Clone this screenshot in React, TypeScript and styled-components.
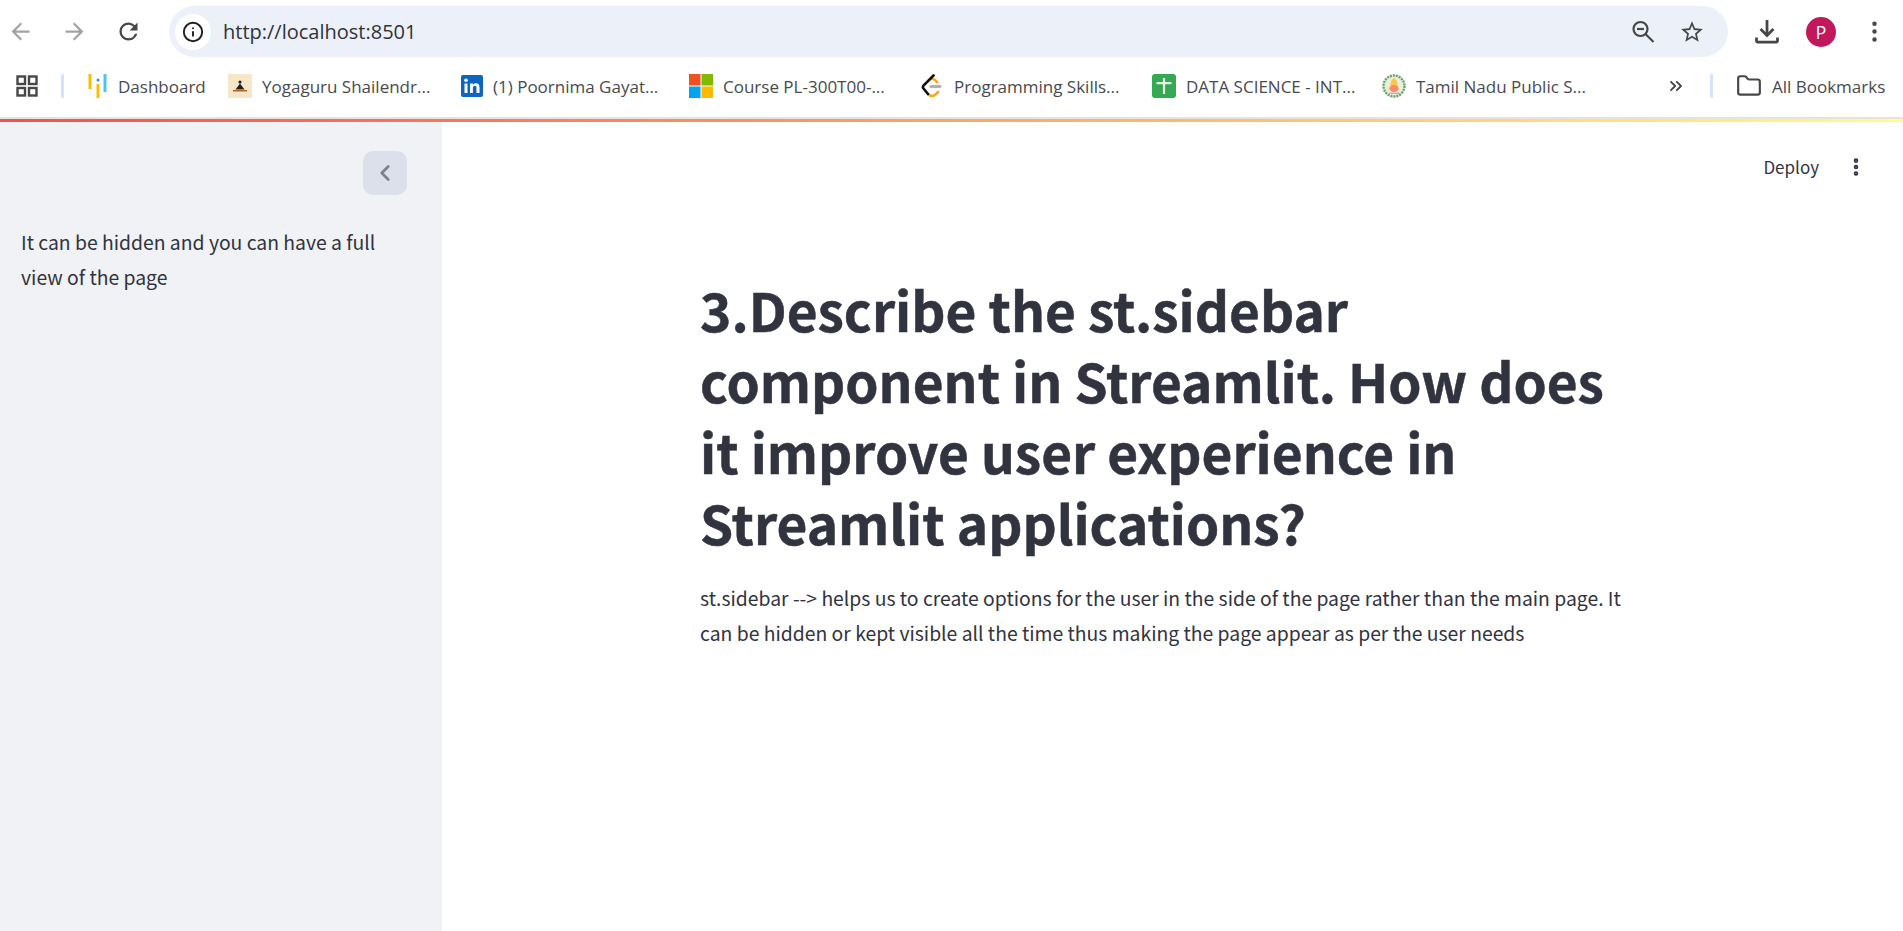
import styled, { createGlobalStyle } from "styled-components";
import { ChevronLeft, ChevronsRight, EllipsisVertical, Folder, Info } from "lucide-react";

const GlobalStyle = createGlobalStyle`
    html, body {
        margin: 0;
        height: 100%;
        background: #fff;
        overflow: hidden;
    }
    #root {
        height: 100%;
    }
`;

const Page = styled.div`
    height: 931px;
    display: flex;
    flex-direction: column;
`;

const Toolbar = styled.div`
    height: 60px;
    display: flex;
    align-items: center;
    padding-top: 3px;
    box-sizing: border-box;
    background: #fff;
`;

const NavGroup = styled.div`
    display: flex;
    align-items: center;
    gap: 27px;
    width: 169px;
    padding-left: 7px;
    box-sizing: border-box;
    flex-shrink: 0;
`;

const NavButton = styled.div<{ $active?: boolean }>`
    display: flex;
    color: ${(p) => (p.$active ? "#474747" : "#a3a3a3")};
`;

const Omnibox = styled.div`
    width: 1559px;
    height: 51px;
    border-radius: 26px;
    background: #ecf0f9;
    display: flex;
    align-items: center;
    padding: 0 23px 0 6px;
    box-sizing: border-box;
    flex-shrink: 0;
`;

const InfoChip = styled.div`
    width: 36px;
    height: 36px;
    border-radius: 50%;
    background: #fff;
    display: flex;
    align-items: center;
    justify-content: center;
    color: #1f1f1f;
    flex-shrink: 0;
`;

const Url = styled.span`
    font-family: "Open Sans", "Noto Sans", sans-serif;
    font-size: 20px;
    color: #303338;
    margin-left: 12px;
    flex: 1;
`;

const OmniIcons = styled.div`
    display: flex;
    align-items: center;
    gap: 24px;
    color: #474747;
`;

const RightTools = styled.div`
    display: flex;
    align-items: center;
    padding-left: 27px;
    color: #474747;
`;

const Avatar = styled.div`
    width: 30px;
    height: 30px;
    border-radius: 50%;
    background: #c2185b;
    color: #fff;
    font-family: "Open Sans", sans-serif;
    font-size: 18px;
    display: flex;
    align-items: center;
    justify-content: center;
    margin-left: 27px;
`;

const MoreWrap = styled.div`
    margin-left: 25px;
    display: flex;
    color: #474747;
`;

const BookmarkBar = styled.div`
    height: 59px;
    display: flex;
    align-items: center;
    padding: 0 0 5px 15px;
    box-sizing: border-box;
    background: #fff;
    font-family: "Open Sans", "Noto Sans", sans-serif;
    font-size: 17px;
    color: #474a50;
    white-space: nowrap;
    border-bottom: 2px solid #e3e3e3;
`;

const Separator = styled.div<{ $width: number }>`
    width: ${(p) => p.$width}px;
    display: flex;
    justify-content: center;
    flex-shrink: 0;

    &::before {
        content: "";
        width: 3px;
        height: 24px;
        border-radius: 2px;
        background: #d3e3fd;
    }
`;

const AppsSeparator = styled(Separator)`
    margin-right: 3px;
`;

const Bookmark = styled.div<{ $width: number }>`
    width: ${(p) => p.$width}px;
    display: flex;
    align-items: center;
    gap: 10px;
    flex-shrink: 0;
    overflow: hidden;
`;

const GradientLine = styled.div`
    height: 3px;
    background: linear-gradient(90deg, #ff4b4b, #fffd80);
    flex-shrink: 0;
`;

const Body = styled.div`
    flex: 1;
    display: flex;
    min-height: 0;
`;

const Sidebar = styled.aside`
    width: 442px;
    background: #f0f2f6;
    flex-shrink: 0;
    padding: 29px 35px 0 21px;
    box-sizing: border-box;
    display: flex;
    flex-direction: column;
`;

const CollapseButton = styled.div`
    width: 44px;
    height: 44px;
    border-radius: 10px;
    background: #dce0ea;
    color: #7d808d;
    display: flex;
    align-items: center;
    justify-content: center;
    align-self: flex-end;
`;

const SideText = styled.p`
    margin: 30px 0 0;
    font-family: "Noto Sans CJK JP", "Source Sans Pro", sans-serif;
    font-size: 19.35px;
    line-height: 35px;
    color: #31333f;
`;

const Main = styled.main`
    flex: 1;
    display: flex;
    flex-direction: column;
    position: relative;
`;

const DeployBar = styled.div`
    position: absolute;
    top: 32px;
    right: 36px;
    display: flex;
    align-items: center;
    gap: 26px;
    font-family: "Noto Sans CJK JP", sans-serif;
    font-size: 17px;
    color: #31333f;
`;

const Content = styled.div`
    width: 930px;
    margin-left: 258px;
    padding-top: 151px;
`;

const Title = styled.h1`
    margin: 0;
    font-family: "Noto Sans CJK JP", sans-serif;
    font-weight: 700;
    font-size: 53.2px;
    line-height: 71px;
    color: #31333f;
    -webkit-text-stroke: 0.5px #31333f;
`;

const Paragraph = styled.p`
    margin: 24px 0 0;
    font-family: "Noto Sans CJK JP", sans-serif;
    font-size: 19.35px;
    line-height: 35px;
    color: #31333f;
`;

function MaterialIcon({ d, size }: { d: string; size: number }) {
    return (
        <svg width={size} height={size} viewBox="0 0 24 24" fill="currentColor">
            <path d={d} />
        </svg>
    );
}

const ARROW_BACK = "M20 11H7.83l5.59-5.59L12 4l-8 8 8 8 1.41-1.41L7.83 13H20v-2z";
const ARROW_FORWARD = "M4 11h12.17l-5.59-5.59L12 4l8 8-8 8-1.41-1.41L16.17 13H4v-2z";
const REFRESH = "M17.65 6.35A7.958 7.958 0 0 0 12 4c-4.42 0-7.99 3.58-7.99 8s3.57 8 7.99 8c3.73 0 6.84-2.55 7.73-6h-2.08A5.99 5.99 0 0 1 12 18c-3.31 0-6-2.69-6-6s2.69-6 6-6c1.66 0 3.14.69 4.22 1.78L13 11h7V4l-2.35 2.35z";
const STAR_BORDER = "M22 9.24l-7.19-.62L12 2 9.19 8.63 2 9.24l5.46 4.73L5.82 21 12 17.27 18.18 21l-1.63-7.03L22 9.24zM12 15.4l-3.76 2.27 1-4.28-3.32-2.88 4.38-.38L12 6.1l1.71 4.04 4.38.38-3.32 2.88 1 4.28L12 15.4z";

function ZoomOutIcon() {
    return (
        <svg width="24" height="24" viewBox="0 0 24 24" fill="none" stroke="currentColor" strokeWidth="2.2">
            <circle cx="9.5" cy="9" r="7" />
            <path d="M6 9h7" />
            <path d="M14.5 14l8 8" />
        </svg>
    );
}

function DownloadIcon() {
    return (
        <svg width="24" height="24" viewBox="0 0 24 24" fill="none" stroke="currentColor" strokeWidth="2.8">
            <path d="M12 0v15" />
            <path d="M5.5 9l6.5 6.5L18.5 9" />
            <path d="M1.5 17.5v3.6q0 1 1 1h19q1 0 1-1v-3.6" />
        </svg>
    );
}

function GridIcon() {
    return (
        <svg width="24" height="24" viewBox="0 0 24 24" fill="none" stroke="#474747" strokeWidth="2.4">
            <rect x="2.5" y="2.5" width="7.5" height="7.5" />
            <rect x="14" y="2.5" width="7.5" height="7.5" />
            <rect x="2.5" y="14" width="7.5" height="7.5" />
            <rect x="14" y="14" width="7.5" height="7.5" />
        </svg>
    );
}

function LookerIcon() {
    return (
        <svg width="20" height="24" viewBox="0 0 20 24" fill="none" strokeWidth="3">
            <path d="M2 0v15" stroke="#fbbc04" />
            <path d="M10 10v14" stroke="#fbbc04" />
            <circle cx="10" cy="6" r="1.5" fill="#4285f4" />
            <path d="M17 0v18" stroke="#4fc3f7" />
        </svg>
    );
}

function YogaIcon() {
    return (
        <svg width="24" height="24" viewBox="0 0 24 24">
            <rect width="24" height="24" fill="#f7e6c8" />
            <circle cx="12" cy="8" r="1.6" fill="#222" />
            <path d="M12 9.5l4.5 6h-9z" fill="#222" />
            <path d="M5 16h14v1.5H5z" fill="#b5651d" />
        </svg>
    );
}

function LinkedInIcon() {
    return (
        <svg width="22" height="22" viewBox="0 0 22 22">
            <rect width="22" height="22" rx="2" fill="#0a66c2" />
            <rect x="3.5" y="8.5" width="3" height="9.5" fill="#fff" />
            <circle cx="5" cy="5.3" r="1.8" fill="#fff" />
            <path d="M9 8.5h2.9v1.4c.6-1 1.7-1.7 3-1.7 2.6 0 3.6 1.6 3.6 4.2V18h-3v-5c0-1.3-.4-2.2-1.6-2.2-1.3 0-2 .9-2 2.3V18H9z" fill="#fff" />
        </svg>
    );
}

function MicrosoftIcon() {
    return (
        <svg width="24" height="24" viewBox="0 0 24 24">
            <rect width="11.5" height="11.5" fill="#f25022" />
            <rect x="12.5" width="11.5" height="11.5" fill="#7fba00" />
            <rect y="12.5" width="11.5" height="11.5" fill="#00a4ef" />
            <rect x="12.5" y="12.5" width="11.5" height="11.5" fill="#ffb900" />
        </svg>
    );
}

function LeetCodeIcon() {
    return (
        <svg width="24" height="24" viewBox="0 0 24 24" fill="none" strokeWidth="2.6" strokeLinecap="round">
            <path d="M9 6q3-2.5 6 0l2 2" stroke="#f9a825" />
            <path d="M8 20q4 4 8 0l2-2" stroke="#f9a825" />
            <path d="M13.5 1.5L3.5 11.5q-1.2 1.5 0 3L8 20" stroke="#111" />
            <path d="M11 12.5h9" stroke="#b0b0b0" strokeWidth="3" />
        </svg>
    );
}

function SheetsIcon() {
    return (
        <svg width="24" height="24" viewBox="0 0 24 24">
            <rect width="24" height="24" rx="3" fill="#34a853" />
            <path d="M4.5 8h15v2.2h-15z M10.9 4h2.2v16h-2.2z" fill="#e6f4ea" />
        </svg>
    );
}

function TamilNaduIcon() {
    return (
        <svg width="24" height="24" viewBox="0 0 24 24">
            <circle cx="12" cy="12" r="11.5" fill="#e6efe0" />
            <circle cx="12" cy="12" r="10.5" fill="none" stroke="#6fa36f" strokeWidth="2.4" strokeDasharray="2 1" />
            <path d="M12 4c-2.5 1-3.5 4-3.5 7-1 2-2 3.5-2 5h11c0-1.5-1-3-2-5 0-3-1-6-3.5-7z" fill="#f8c84a" />
            <ellipse cx="12" cy="14.5" rx="4" ry="3.5" fill="#fb8a6a" />
            <path d="M7 18.5h10V20H7z" fill="#e2a6a6" />
        </svg>
    );
}

const bookmarks = [
    { icon: <LookerIcon />, label: "Dashboard", width: 140 },
    { icon: <YogaIcon />, label: "Yogaguru Shailendr...", width: 233 },
    { icon: <LinkedInIcon />, label: "(1) Poornima Gayat...", width: 228 },
    { icon: <MicrosoftIcon />, label: "Course PL-300T00-...", width: 231 },
    { icon: <LeetCodeIcon />, label: "Programming Skills...", width: 232 },
    { icon: <SheetsIcon />, label: "DATA SCIENCE - INT...", width: 230 },
    { icon: <TamilNaduIcon />, label: "Tamil Nadu Public S...", width: 284 },
];

export default function App() {
    return (
        <Page>
            <GlobalStyle />
            <Toolbar>
                <NavGroup>
                    <NavButton><MaterialIcon d={ARROW_BACK} size={27} /></NavButton>
                    <NavButton><MaterialIcon d={ARROW_FORWARD} size={27} /></NavButton>
                    <NavButton $active><MaterialIcon d={REFRESH} size={27} /></NavButton>
                </NavGroup>
                <Omnibox>
                    <InfoChip><Info size={22} strokeWidth={2.1} /></InfoChip>
                    <Url>http://localhost:8501</Url>
                    <OmniIcons>
                        <ZoomOutIcon />
                        <MaterialIcon d={STAR_BORDER} size={26} />
                    </OmniIcons>
                </Omnibox>
                <RightTools>
                    <DownloadIcon />
                    <Avatar>P</Avatar>
                    <MoreWrap><EllipsisVertical size={27} strokeWidth={2} /></MoreWrap>
                </RightTools>
            </Toolbar>
            <BookmarkBar>
                <GridIcon />
                <AppsSeparator $width={46} />
                {bookmarks.map((b) => (
                    <Bookmark key={b.label} $width={b.width}>
                        {b.icon}
                        <span>{b.label}</span>
                    </Bookmark>
                ))}
                <ChevronsRight size={20} strokeWidth={2.2} color="#474747" />
                <Separator $width={50} />
                <Bookmark $width={160}>
                    <Folder size={26} strokeWidth={2} color="#474747" />
                    <span>All Bookmarks</span>
                </Bookmark>
            </BookmarkBar>
            <GradientLine />
            <Body>
                <Sidebar>
                    <CollapseButton><ChevronLeft size={26} strokeWidth={2.5} /></CollapseButton>
                    <SideText>It can be hidden and you can have a full view of the page</SideText>
                </Sidebar>
                <Main>
                    <DeployBar>
                        <span>Deploy</span>
                        <EllipsisVertical size={22} strokeWidth={3} />
                    </DeployBar>
                    <Content>
                        <Title>3.Describe the st.sidebar component in Streamlit. How does it improve user experience in Streamlit applications?</Title>
                        <Paragraph>st.sidebar --&gt; helps us to create options for the user in the side of the page rather than the main page. It can be hidden or kept visible all the time thus making the page appear as per the user needs</Paragraph>
                    </Content>
                </Main>
            </Body>
        </Page>
    );
}
